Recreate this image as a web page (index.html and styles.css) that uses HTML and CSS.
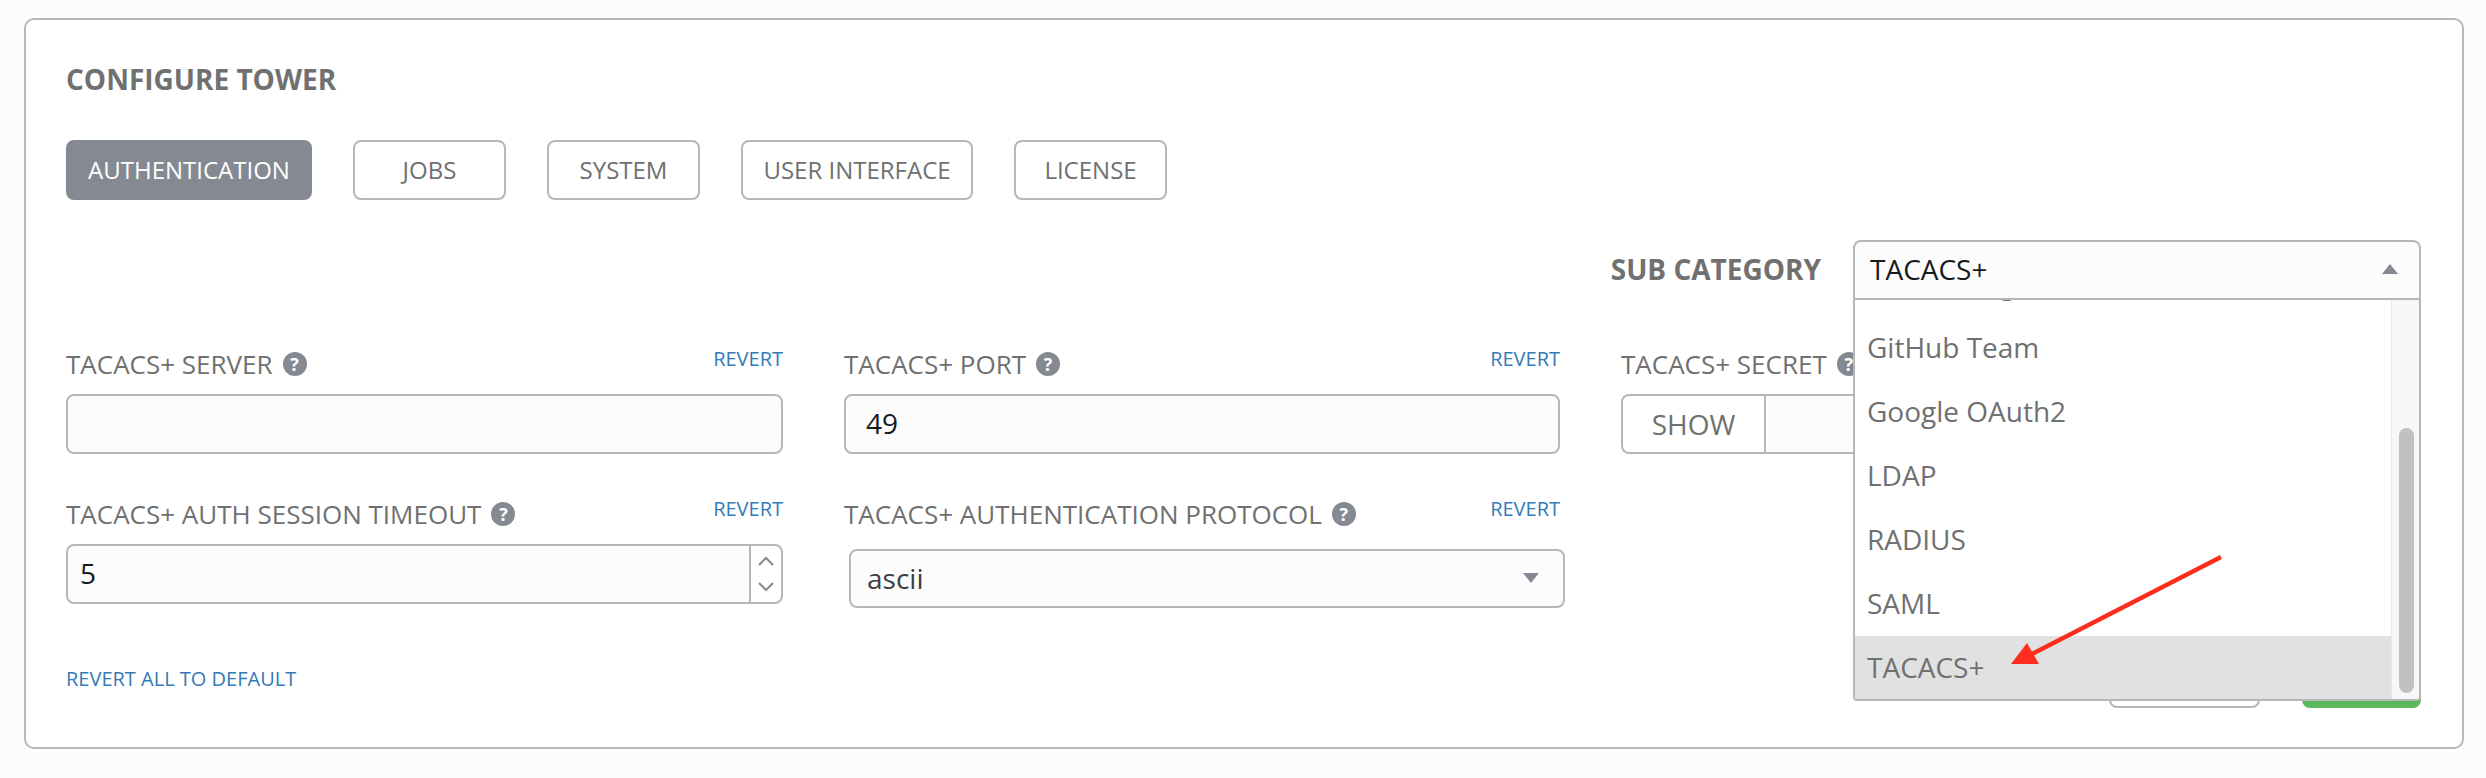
FILE: index.html
```html
<!DOCTYPE html>
<html lang="en">
<head>
  <meta charset="UTF-8" />
  <title>Configure Tower</title>
  <link rel="stylesheet" href="styles.css">
</head>
<body>
  <div class="panel">
    <h1 class="panel-title">CONFIGURE TOWER</h1>

    <div class="tabs">
      <button class="tab tab-auth active">AUTHENTICATION</button>
      <button class="tab">JOBS</button>
      <button class="tab">SYSTEM</button>
      <button class="tab tab-ui">USER INTERFACE</button>
      <button class="tab">LICENSE</button>
    </div>

    <div class="sub-row">
      <span class="sub-label">SUB CATEGORY</span>
      <div class="sub-select">
        <div class="sub-value">
          <span>TACACS+</span>
          <span class="caret-up"></span>
        </div>
        <!-- open dropdown, scrolled to the bottom -->
        <div class="dropdown">
          <ul class="dropdown-list">
            <li>GitHub Org</li>
            <li>GitHub Team</li>
            <li>Google OAuth2</li>
            <li>LDAP</li>
            <li>RADIUS</li>
            <li>SAML</li>
            <li class="selected">TACACS+</li>
          </ul>
          <div class="scroll-track"><div class="scroll-thumb"></div></div>
        </div>
      </div>
    </div>

    <div class="form-grid">
      <div class="field">
        <div class="field-head">
          <label>TACACS+ SERVER <span class="help">?</span></label>
          <a class="revert">REVERT</a>
        </div>
        <div class="text-input"></div>
      </div>

      <div class="field">
        <div class="field-head">
          <label>TACACS+ PORT <span class="help">?</span></label>
          <a class="revert">REVERT</a>
        </div>
        <div class="text-input">49</div>
      </div>

      <div class="field">
        <div class="field-head">
          <label>TACACS+ SECRET <span class="help">?</span></label>
          <a class="revert">REVERT</a>
        </div>
        <div class="secret-group">
          <button class="show-btn">SHOW</button>
          <div class="secret-input"></div>
        </div>
      </div>

      <div class="field">
        <div class="field-head">
          <label>TACACS+ AUTH SESSION TIMEOUT <span class="help">?</span></label>
          <a class="revert">REVERT</a>
        </div>
        <div class="text-input number-input">
          <span class="number-value">5</span>
          <div class="stepper">
            <svg width="20" height="12" viewBox="0 0 20 12"><path d="M3 10 L10 3 L17 10" /></svg>
            <svg width="20" height="12" viewBox="0 0 20 12"><path d="M3 2 L10 9 L17 2" /></svg>
          </div>
        </div>
      </div>

      <div class="field">
        <div class="field-head">
          <label>TACACS+ AUTHENTICATION PROTOCOL <span class="help">?</span></label>
          <a class="revert">REVERT</a>
        </div>
        <div class="select-input">
          <span>ascii</span>
          <span class="caret-down"></span>
        </div>
      </div>
    </div>

    <div class="panel-foot">
      <a class="revert-all">REVERT ALL TO DEFAULT</a>
      <div class="foot-buttons">
        <button class="btn-cancel">CANCEL</button>
        <button class="btn-save">SAVE</button>
      </div>
    </div>

    <!-- red annotation arrow -->
    <svg class="annotation" width="240" height="120" viewBox="0 0 240 120">
      <line x1="221" y1="7" x2="30" y2="105" stroke="#ff2d1e" stroke-width="4.5" />
      <polygon points="11,114 39,114 27,93" fill="#ff2d1e" />
    </svg>
  </div>
</body>
</html>
```

FILE: styles.css
```css
:root {
  --border: #b7b7b7;
  --text: #707070;
  --dark: #161b1f;
  --grey: #848992;
  --field-bg: #fcfcfc;
  --link: #337ab7;
  --radius: 8px;
}

*, *::before, *::after {
  box-sizing: border-box;
  margin: 0;
  padding: 0;
}

body {
  font-family: "Open Sans", sans-serif;
  background: var(--field-bg);
  color: var(--text);
  height: 778px;
  overflow: hidden;
  padding: 18px 22px 0 24px;
}

.panel {
  position: relative;
  height: 731px;
  background: #fff;
  border: 2px solid var(--border);
  border-radius: 10px;
  padding: 42px 41px 0 40px;
}

.panel-title {
  font-size: 28px;
  font-weight: 700;
  line-height: 34px;
  color: var(--text);
}

button {
  font-family: inherit;
  cursor: pointer;
}

.tabs {
  display: flex;
  gap: 41px;
  margin-top: 44px;
}

.tab {
  width: 153px;
  height: 60px;
  padding-bottom: 2px;
  background: #fff;
  border: 2px solid var(--border);
  border-radius: var(--radius);
  color: var(--text);
  font-size: 24px;
}

.tab-auth {
  width: 246px;
}

.tab-ui {
  width: 232px;
}

.tab.active {
  background: var(--grey);
  border-color: var(--grey);
  color: #fff;
}

.sub-row {
  display: flex;
  justify-content: flex-end;
  align-items: center;
  gap: 32px;
  margin-top: 40px;
}

.sub-label {
  padding-bottom: 2px;
  font-size: 28px;
  font-weight: 700;
}

.sub-select {
  position: relative;
  width: 568px;
}

.sub-value {
  display: flex;
  justify-content: space-between;
  align-items: center;
  height: 60px;
  padding: 0 21px 2px 15px;
  background: var(--field-bg);
  border: 2px solid var(--border);
  border-radius: var(--radius) var(--radius) 0 0;
  color: var(--dark);
  font-size: 28px;
}

.caret-up {
  border-left: 8px solid transparent;
  border-right: 8px solid transparent;
  border-bottom: 10px solid var(--grey);
}

.caret-down {
  border-left: 8px solid transparent;
  border-right: 8px solid transparent;
  border-top: 10px solid var(--grey);
}

.dropdown {
  position: absolute;
  top: 60px;
  left: 0;
  right: 0;
  z-index: 5;
  display: flex;
  height: 401px;
  overflow: hidden;
  background: #fff;
  border: 2px solid var(--border);
  border-top: none;
  border-radius: 0 0 4px 4px;
}

.dropdown-list {
  flex: 1;
  margin-top: -48px;
  list-style: none;
  font-size: 28px;
}

.dropdown-list li {
  height: 64px;
  line-height: 62px;
  padding-left: 12px;
}

.dropdown-list li.selected {
  background: #e1e1e1;
}

.scroll-track {
  display: flex;
  flex: 0 0 28px;
  padding: 128px 5px 6px 7px;
  background: #f7f7f7;
  border-left: 1px solid #e8e8e8;
}

.scroll-thumb {
  flex: 1;
  background: #c1c1c1;
  border-radius: 8px;
}

.form-grid {
  display: grid;
  grid-template-columns: 717px 716px 716px;
  column-gap: 61px;
  row-gap: 42px;
  margin-top: 46px;
}

.field-head {
  display: flex;
  justify-content: space-between;
  align-items: flex-start;
  margin-bottom: 12px;
}

.field-head label {
  display: flex;
  align-items: center;
  gap: 10px;
  font-size: 26px;
  line-height: 36px;
}

.help {
  display: inline-block;
  width: 24px;
  height: 24px;
  border-radius: 50%;
  background: var(--grey);
  color: #fff;
  font-size: 18px;
  font-weight: 700;
  line-height: 24px;
  text-align: center;
}

.revert {
  color: var(--link);
  font-size: 20px;
  line-height: 26px;
}

.text-input {
  height: 60px;
  padding-left: 20px;
  background: var(--field-bg);
  border: 2px solid var(--border);
  border-radius: var(--radius);
  color: var(--dark);
  font-size: 28px;
  line-height: 54px;
}

.number-input {
  display: flex;
  justify-content: space-between;
  padding-left: 12px;
}

.stepper {
  display: flex;
  flex-direction: column;
  justify-content: center;
  align-items: center;
  gap: 14px;
  width: 32px;
  background: #fff;
  border-left: 2px solid var(--border);
  border-radius: 0 var(--radius) var(--radius) 0;
}

.stepper svg {
  display: block;
}

.stepper path {
  fill: none;
  stroke: var(--grey);
  stroke-width: 2;
}

.select-input {
  display: flex;
  justify-content: space-between;
  align-items: center;
  width: 716px;
  height: 59px;
  margin: 17px 0 0 5px;
  padding: 0 24px 2px 16px;
  background: var(--field-bg);
  border: 2px solid var(--border);
  border-radius: var(--radius);
  font-size: 28px;
  color: #3a3f44;
}

.secret-group {
  display: flex;
  height: 60px;
}

.show-btn {
  flex: 0 0 145px;
  background: #fff;
  border: 2px solid var(--border);
  border-radius: var(--radius) 0 0 var(--radius);
  color: var(--text);
  font-size: 28px;
}

.secret-input {
  flex: 1;
  background: var(--field-bg);
  border: 2px solid var(--border);
  border-left: none;
  border-radius: 0 var(--radius) var(--radius) 0;
}

.panel-foot {
  display: flex;
  justify-content: space-between;
  align-items: center;
  margin-top: 40px;
}

.revert-all {
  color: var(--link);
  font-size: 20px;
}

.foot-buttons {
  display: flex;
  gap: 42px;
}

.foot-buttons button {
  height: 60px;
  border-radius: var(--radius);
  font-size: 24px;
}

.btn-cancel {
  width: 151px;
  background: #fff;
  border: 2px solid var(--border);
  color: var(--text);
}

.btn-save {
  width: 119px;
  background: #5cb85c;
  border: 2px solid #5cb85c;
  color: #fff;
}

.annotation {
  position: absolute;
  left: 1974px;
  top: 530px;
  z-index: 10;
}
```
